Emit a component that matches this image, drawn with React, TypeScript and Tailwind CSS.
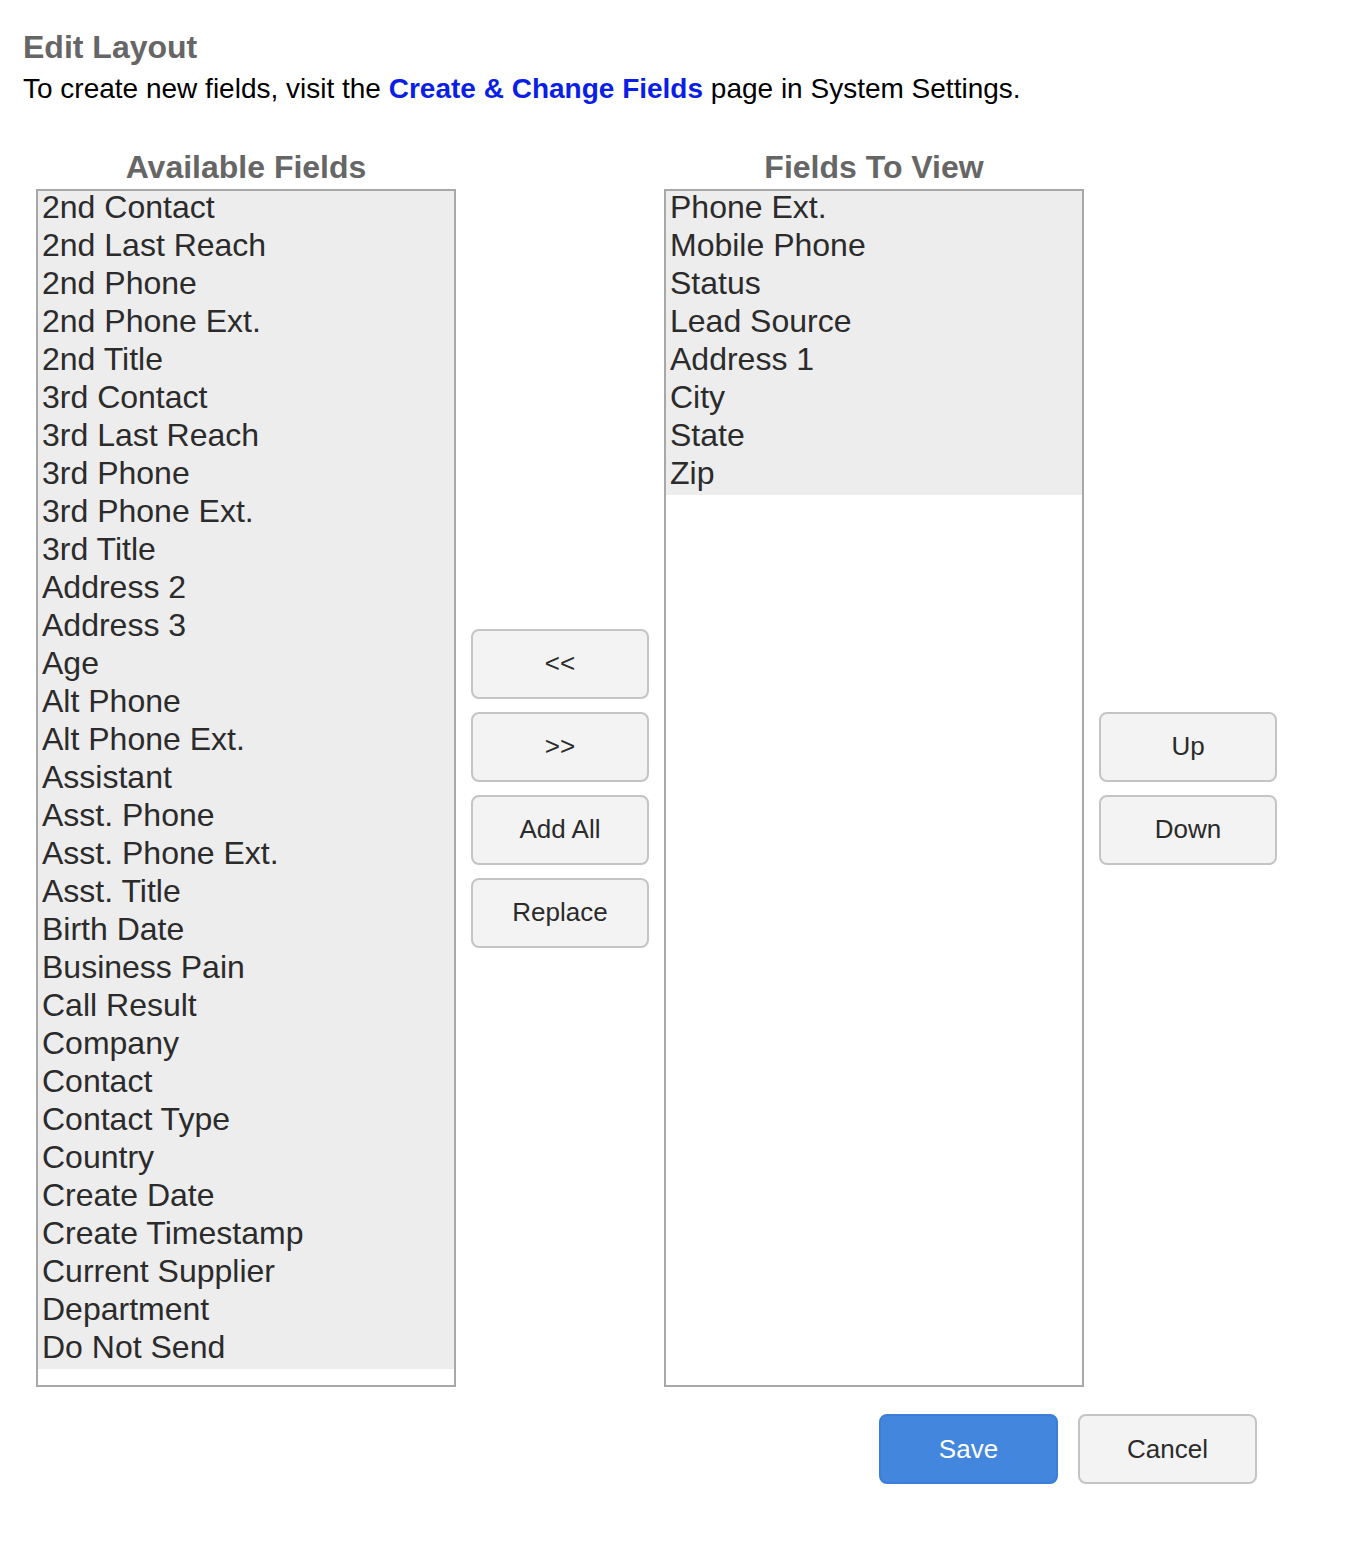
import React from 'react'

const available = [
  '2nd Contact',
  '2nd Last Reach',
  '2nd Phone',
  '2nd Phone Ext.',
  '2nd Title',
  '3rd Contact',
  '3rd Last Reach',
  '3rd Phone',
  '3rd Phone Ext.',
  '3rd Title',
  'Address 2',
  'Address 3',
  'Age',
  'Alt Phone',
  'Alt Phone Ext.',
  'Assistant',
  'Asst. Phone',
  'Asst. Phone Ext.',
  'Asst. Title',
  'Birth Date',
  'Business Pain',
  'Call Result',
  'Company',
  'Contact',
  'Contact Type',
  'Country',
  'Create Date',
  'Create Timestamp',
  'Current Supplier',
  'Department',
  'Do Not Send',
]

const selected = ['Phone Ext.', 'Mobile Phone', 'Status', 'Lead Source', 'Address 1', 'City', 'State', 'Zip']

function FieldList({ title, items }: { title: string; items: string[] }) {
  return (
    <div className="flex w-[420px] flex-col">
      <h2 className="mb-[3px] text-center text-[32px] font-bold leading-[38px] text-[#666666]">{title}</h2>
      <div className="h-[1198px] border-2 border-[#a8a8a8] bg-white">
        <ul className="bg-[#ededed]">
          {items.map((item) => (
            <li key={item} className="h-[38px] px-[4px] pb-[6px] text-[32px] leading-[32px] text-[#2b2b2b]">
              {item}
            </li>
          ))}
        </ul>
      </div>
    </div>
  )
}

function Btn({ children }: { children: React.ReactNode }) {
  return (
    <button className="h-[70px] w-[178px] rounded-[8px] border-2 border-[#c4c4c4] bg-[#f3f3f3] text-[26px] text-[#2b2b2b]">
      {children}
    </button>
  )
}

export default function App() {
  return (
    <div className="min-h-[1564px] bg-white font-['Liberation_Sans',Arial,sans-serif]">
      {/* Header */}
      <div className="px-[23px] pt-[28px]">
        <h1 className="text-[32px] font-bold leading-[38px] text-[#666666]">Edit Layout</h1>
        <p className="mt-[6px] text-[28px] leading-[34px] text-black">
          To create new fields, visit the{' '}
          <a href="#" className="font-bold text-[#0a1ee6]">
            Create &amp; Change Fields
          </a>{' '}
          page in System Settings.
        </p>
      </div>

      {/* Lists */}
      <div className="mt-[42px] flex pl-[36px]">
        <FieldList title="Available Fields" items={available} />
        <div className="flex w-[208px] flex-col items-center justify-center gap-[13px] pt-[41px]">
          <Btn>&lt;&lt;</Btn>
          <Btn>&gt;&gt;</Btn>
          <Btn>Add All</Btn>
          <Btn>Replace</Btn>
        </div>
        <FieldList title="Fields To View" items={selected} />
        <div className="flex w-[208px] flex-col items-center justify-center gap-[13px] pt-[41px]">
          <Btn>Up</Btn>
          <Btn>Down</Btn>
        </div>
      </div>

      {/* Actions */}
      <div className="mt-[27px] flex justify-end gap-[20px] pr-[89px]">
        <button className="h-[70px] w-[179px] rounded-[8px] border-2 border-[#3b7dd8] bg-[#4286dd] text-[26px] text-white">
          Save
        </button>
        <button className="h-[70px] w-[179px] rounded-[8px] border-2 border-[#c4c4c4] bg-[#f3f3f3] text-[26px] text-[#2b2b2b]">
          Cancel
        </button>
      </div>
    </div>
  )
}
